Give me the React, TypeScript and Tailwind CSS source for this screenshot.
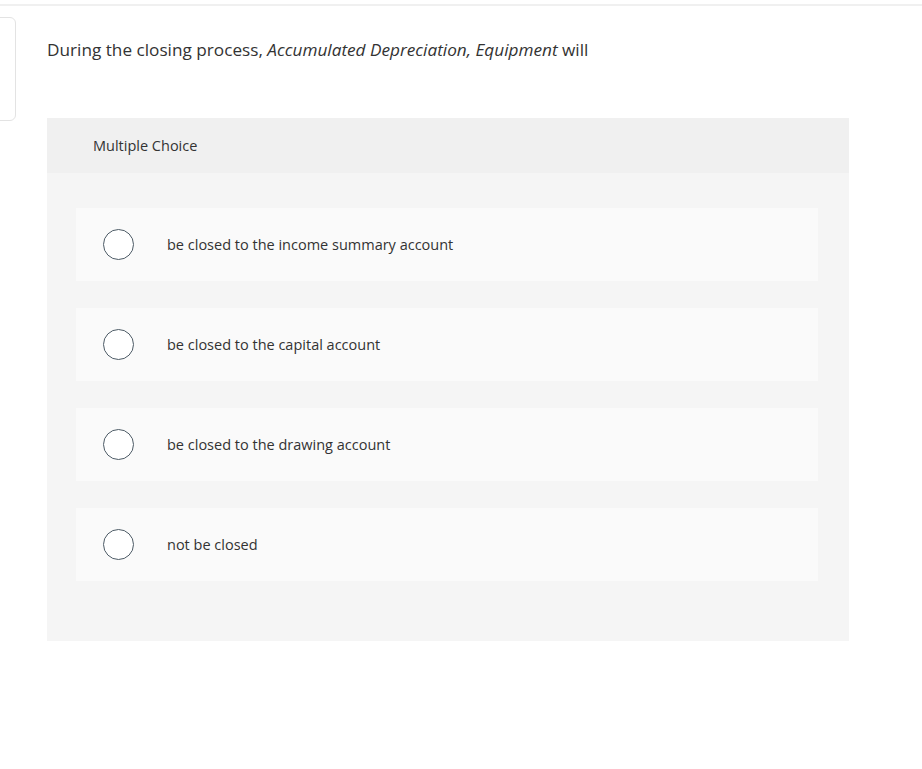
import React from "react";

const options = [
  "be closed to the income summary account",
  "be closed to the capital account",
  "be closed to the drawing account",
  "not be closed",
];

export default function App() {
  return (
    <div className="min-h-[769px] w-full bg-white text-[#333]" style={{ fontFamily: "'Open Sans', Lato, sans-serif" }}>
      <div className="h-[6px] border-b-2 border-[#f0f0f0] bg-white" />
      <div className="relative">
        <div className="absolute left-[-10px] top-[11px] h-[104px] w-[26px] rounded-md border border-[#e3e3e3] bg-white" />
        <div className="pl-[47px] pt-[32px]">
          <p className="text-[17.2px] leading-[24px] text-[#333]">
            During the closing process, <em>Accumulated Depreciation, Equipment</em> will
          </p>
          <div className="mt-[56px] w-[802px] bg-[#f5f5f5] pb-[60px]">
            <div className="flex h-[55px] items-center bg-[#f0f0f0] pl-[46px] text-[14.5px] text-[#333]">
              Multiple Choice
            </div>
            <div className="flex flex-col gap-[27px] pl-[29px] pr-[31px] pt-[35px]">
              {options.map((o) => (
                <div key={o} className="flex h-[73px] items-center bg-[#fafafa]">
                  <div className="ml-[27px] h-[31px] w-[31px] shrink-0 rounded-full border border-[#4d5b66] bg-white" />
                  <span className="ml-[33px] text-[14.5px] text-[#333]">{o}</span>
                </div>
              ))}
            </div>
          </div>
        </div>
      </div>
    </div>
  );
}
